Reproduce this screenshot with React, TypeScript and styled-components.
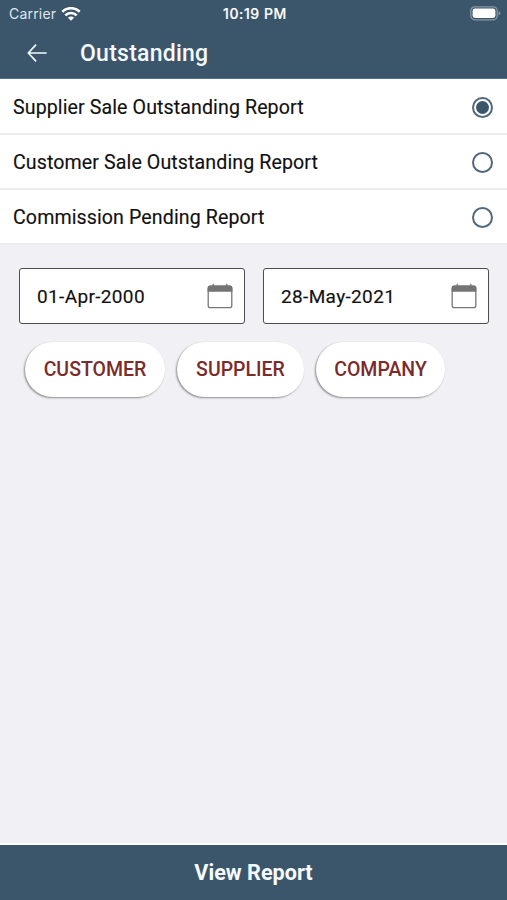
import React, { useState } from "react";
import styled, { createGlobalStyle } from "styled-components";

const navy = "#3b566b";

const GlobalStyle = createGlobalStyle`
  * { box-sizing: border-box; }
  body { margin: 0; background: #f0f0f5; }
  button { font: inherit; border: 0; padding: 0; background: none; cursor: pointer; }
`;

const Screen = styled.div`
  display: flex;
  flex-direction: column;
  height: 900px;
  width: 507px;
  overflow: hidden;
  background: #f0f0f5;
  font-family: Roboto, sans-serif;
  color: #111;
`;

const StatusBar = styled.div`
  display: grid;
  grid-template-columns: 1fr auto 1fr;
  align-items: center;
  flex: none;
  height: 27px;
  padding: 0 6px 0 9px;
  background: ${navy};
  color: #fff;
  font-family: Inter, sans-serif;
`;

const Carrier = styled.div`
  display: flex;
  align-items: center;
  gap: 5px;
  color: #dfe6ec;
  font-size: 14px;
  letter-spacing: 0.2px;
`;

const Clock = styled.div`
  font-size: 14px;
  font-weight: 500;
  letter-spacing: 0.6px;
  -webkit-text-stroke: 0.2px #fff;
`;

const Battery = styled.svg`
  justify-self: end;
`;

const TitleBar = styled.header`
  display: flex;
  align-items: center;
  flex: none;
  height: 52px;
  padding-left: 27px;
  background: ${navy};
  color: #f4f9fd;
  border-bottom: 1px solid #536f87;
`;

const BackButton = styled.button`
  display: flex;
  width: 53px;
  color: inherit;
`;

const Title = styled.h1`
  margin: 0;
  padding-top: 2px;
  font-size: 23px;
  line-height: 49px;
  font-weight: 500;
  letter-spacing: 0.25px;
`;

const ReportList = styled.div`
  display: flex;
  flex-direction: column;
  flex: none;
  padding-top: 1px;
  background: #fff;
`;

const ReportRow = styled.button`
  display: flex;
  align-items: center;
  justify-content: space-between;
  flex: none;
  height: 55px;
  padding: 1px 14px 0 13px;
  border-bottom: 2px solid #ededf0;
  color: #111;
`;

const ReportName = styled.span`
  font-size: 19.6px;
  letter-spacing: 0.1px;
  -webkit-text-stroke: 0.15px #111;
`;

const Radio = styled.span<{ $on: boolean }>`
  width: 21px;
  height: 21px;
  border: 2px solid #50687b;
  border-radius: 50%;
  padding: 2px;
  background: ${(p) => (p.$on ? navy : "#fff")} content-box;
`;

const Dates = styled.div`
  display: flex;
  gap: 18px;
  flex: none;
  padding: 23px 18px 0 19px;
`;

const DateField = styled.button`
  display: flex;
  align-items: center;
  justify-content: space-between;
  flex: 1;
  height: 56px;
  padding: 0 11px 0 17px;
  background: #fff;
  border: 1px solid #4c4c54;
  border-radius: 3px;
  color: #111;
`;

const DateText = styled.span`
  font-size: 19px;
  letter-spacing: 0.35px;
  -webkit-text-stroke: 0.15px #111;
`;

const Filters = styled.div`
  display: flex;
  gap: 12px;
  padding: 18px 25px;
`;

const Pill = styled.button<{ $w: number }>`
  width: ${(p) => p.$w}px;
  height: 55px;
  border-radius: 28px;
  background: #fff;
  box-shadow: -1px 1px 2px rgba(0, 0, 0, 0.42);
  color: #7c2b2b;
  font-size: 19.5px;
  font-weight: 500;
`;

const Footer = styled.button`
  flex: none;
  height: 57px;
  margin-top: auto;
  border-top: 2px solid #fafcfe;
  background: ${navy};
  color: #f8fbff;
  font-size: 21.6px;
  font-weight: 700;
`;

const BackArrow = () => (
  <svg width="20" height="18" viewBox="0 0 20 18" fill="none" stroke="currentColor" strokeWidth="1.7" strokeLinecap="round" strokeLinejoin="round">
    <path d="M19 9H1.5M8.6 1.2 1.3 9 8.6 16.8" />
  </svg>
);

const Wifi = () => (
  <svg width="20" height="14" viewBox="0 0 20 14" fill="none" stroke="#fff" strokeWidth="2.7">
    <path d="M1.3 4.8A12.4 12.4 0 0 1 18.7 4.8M4.3 8.4A8 8 0 0 1 15.7 8.4" />
    <path d="M10 13.8 6.9 10.7A4.3 4.3 0 0 1 13.1 10.7Z" fill="#fff" stroke="none" />
  </svg>
);

const Calendar = () => (
  <svg width="26" height="26" viewBox="0 0 26 26" fill="none">
    <rect x="1.2" y="3.2" width="23.6" height="21.4" rx="2.2" stroke="#777779" strokeWidth="1.3" />
    <path d="M.6 8.8V5Q.6 2.6 3 2.6H23Q25.4 2.6 25.4 5V8.8Z" fill="#747476" />
    <path d="M6.2.8V4M19.8.8V4" stroke="#747476" strokeWidth="1.3" />
  </svg>
);

const reports = [
  "Supplier Sale Outstanding Report",
  "Customer Sale Outstanding Report",
  "Commission Pending Report",
];

const filters = [
  { label: "CUSTOMER", width: 140 },
  { label: "SUPPLIER", width: 127 },
  { label: "COMPANY", width: 129 },
];

export default function App() {
  const [selected, setSelected] = useState(0);
  return (
    <>
      <GlobalStyle />
      <Screen>
        <StatusBar>
          <Carrier>
            Carrier
            <Wifi />
          </Carrier>
          <Clock>10:19 PM</Clock>
          <Battery width="31" height="15" viewBox="0 0 31 15">
            <rect x=".8" y=".8" width="26.4" height="13" rx="4" fill="none" stroke="#8798a6" strokeWidth="1.3" />
            <rect x="2.6" y="2.6" width="22.8" height="9.4" rx="2.4" fill="#fff" />
            <path d="M28.6 5V9.6Q30.4 8.8 30.4 7.3T28.6 5Z" fill="#8798a6" />
          </Battery>
        </StatusBar>
        <TitleBar>
          <BackButton aria-label="Back">
            <BackArrow />
          </BackButton>
          <Title>Outstanding</Title>
        </TitleBar>
        <ReportList>
          {reports.map((name, i) => (
            <ReportRow key={name} onClick={() => setSelected(i)}>
              <ReportName>{name}</ReportName>
              <Radio $on={i === selected} />
            </ReportRow>
          ))}
        </ReportList>
        <Dates>
          {["01-Apr-2000", "28-May-2021"].map((date) => (
            <DateField key={date}>
              <DateText>{date}</DateText>
              <Calendar />
            </DateField>
          ))}
        </Dates>
        <Filters>
          {filters.map((f) => (
            <Pill key={f.label} $w={f.width}>
              {f.label}
            </Pill>
          ))}
        </Filters>
        <Footer>View Report</Footer>
      </Screen>
    </>
  );
}
